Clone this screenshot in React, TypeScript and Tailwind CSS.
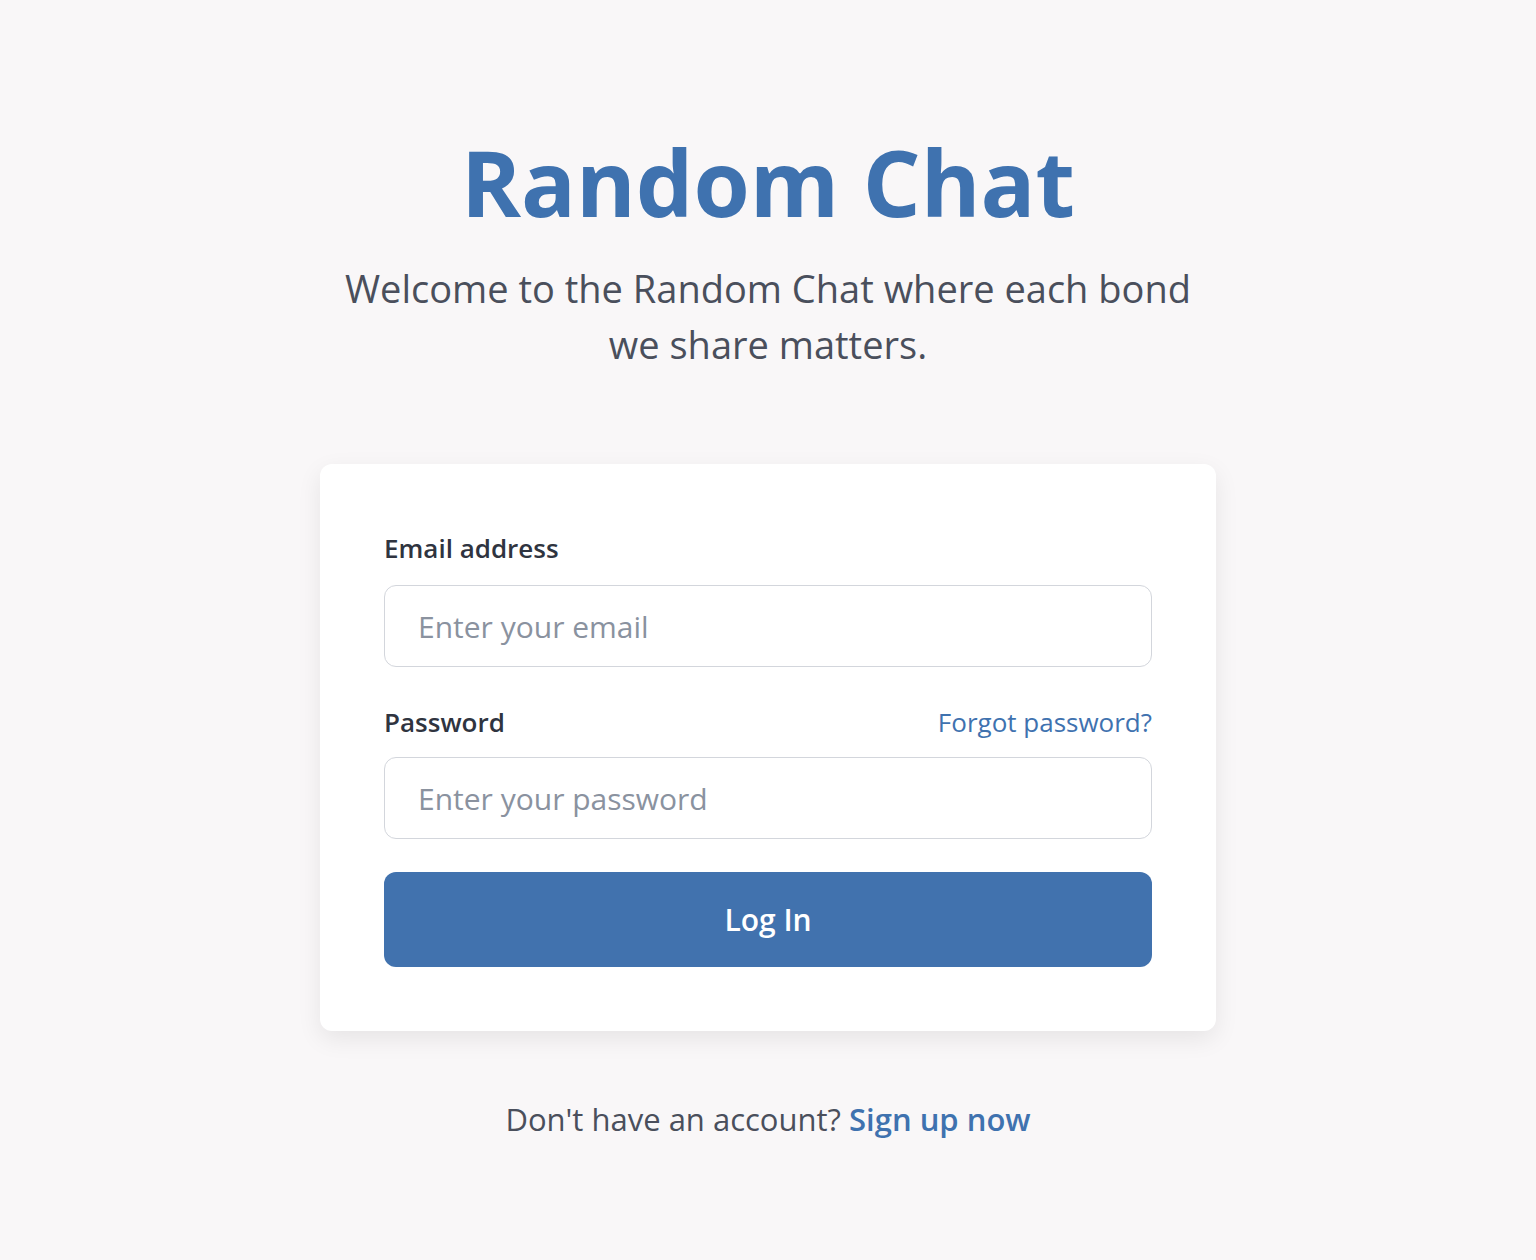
export default function App() {
	return (
		<div className="min-h-screen bg-[#f9f7f8] font-['Segoe_UI','Open_Sans',sans-serif]">
			<div className="flex flex-col items-center pt-[126px]">
				<h1 className="text-[91px] leading-[112px] font-bold text-[#3f72af]">
					Random Chat
				</h1>
				<p className="mt-[22px] max-w-[880px] text-center text-[38px] leading-[56px] text-[#4a4f5c]">
					Welcome to the Random Chat where each bond we share matters.
				</p>

				<div className="mt-[92px] w-[896px] rounded-xl bg-white p-16 shadow-[0_8px_24px_rgba(0,0,0,0.08)]">
					<label className="block text-[26px] leading-[40px] font-semibold text-[#2f3440]">
						Email address
					</label>
					<input
						type="email"
						placeholder="Enter your email"
						className="mt-[17px] h-[82px] w-full rounded-xl border border-[#d3d6dc] bg-white px-[33px] text-[30px] text-[#2f3440] placeholder:text-[#8a929f] outline-none"
					/>

					<div className="mt-[35px] flex items-center justify-between">
						<label className="text-[26px] leading-[40px] font-semibold text-[#2f3440]">
							Password
						</label>
						<a href="#" className="text-[26px] leading-[40px] text-[#3f72af]">
							Forgot password?
						</a>
					</div>
					<input
						type="password"
						placeholder="Enter your password"
						className="mt-[15px] h-[82px] w-full rounded-xl border border-[#d3d6dc] bg-white px-[33px] text-[30px] text-[#2f3440] placeholder:text-[#8a929f] outline-none"
					/>

					<button className="mt-[33px] h-[95px] w-full rounded-xl bg-[#4172ae] text-[30px] font-semibold text-white">
						Log In
					</button>
				</div>

				<p className="mt-[68px] text-[31px] leading-[40px] text-[#4a4f5c]">
					Don't have an account?{" "}
					<a href="#" className="font-semibold text-[#3f72af]">
						Sign up now
					</a>
				</p>
			</div>
		</div>
	);
}
